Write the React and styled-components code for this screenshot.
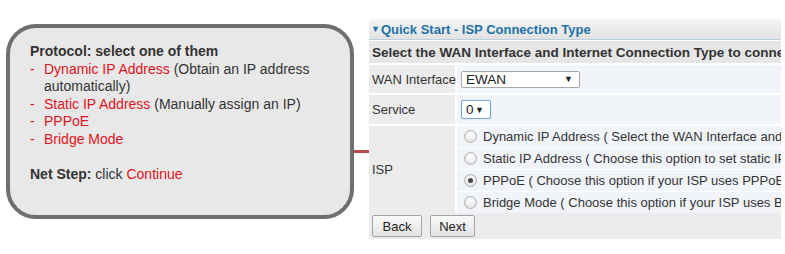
import React from "react";
import styled, { createGlobalStyle } from "styled-components";

const Global = createGlobalStyle`
  html, body { margin: 0; padding: 0; background: #ffffff; }
  body { font-family: "Liberation Sans", Arial, sans-serif; width: 785px; height: 254px; overflow: hidden; }
`;

const Page = styled.div`
  display: flex;
  align-items: flex-start;
  width: 785px;
  height: 254px;
`;

const Bubble = styled.div`
  margin-top: 24px;
  margin-left: 6px;
  box-sizing: border-box;
  width: 348px;
  height: 195px;
  border: 4px solid #6f6f6f;
  border-radius: 30px;
  background: #e8e8e8;
  padding: 15px 0 0 20px;
  font-size: 14px;
  line-height: 17.5px;
  color: #333333;
`;

const Heading = styled.div`
  font-weight: bold;
`;

const Item = styled.div`
  display: flex;
`;

const Dash = styled.span`
  flex: 0 0 14px;
  color: #e0141e;
`;

const Red = styled.span`
  color: #e0141e;
`;

const Spacer = styled.div`
  height: 17.5px;
`;

const Connector = styled.div`
  width: 15px;
  height: 3px;
  margin-top: 150px;
  background: #b94a48;
`;

const Panel = styled.div`
  margin-top: 19px;
  width: 412px;
  overflow: hidden;
  font-size: 13px;
  color: #333333;
  background: #ffffff;
`;

const Header = styled.div`
  height: 20px;
  display: flex;
  align-items: center;
  padding-left: 2px;
  background: linear-gradient(#f5f5f5, #e2e2e2);
  border-bottom: 1px solid #b8cfdd;
  color: #1e72a8;
  font-weight: bold;
  font-size: 13px;
  white-space: nowrap;
`;

const Caret = styled.span`
  font-size: 9px;
  margin-right: 1px;
`;

const TitleRow = styled.div`
  margin-top: 1px;
  height: 22px;
  display: flex;
  align-items: center;
  padding-left: 3px;
  background: #e6e6e6;
  font-weight: bold;
  font-size: 13.5px;
  white-space: nowrap;
  overflow: hidden;
`;

const Grid = styled.div`
  display: grid;
  grid-template-columns: 86px 1fr;
  column-gap: 2px;
  row-gap: 2px;
  margin-top: 2px;
`;

const Label = styled.div`
  background: #ececec;
  display: flex;
  align-items: center;
  padding-left: 3px;
  height: ${(p) => p.$h}px;
  white-space: nowrap;
`;

const Value = styled.div`
  background: #f1f4f9;
  display: flex;
  align-items: center;
  padding-left: 4px;
  height: ${(p) => p.$h}px;
`;

const Options = styled.div`
  display: flex;
  flex-direction: column;
  gap: 1px;
  background: #ffffff;
`;

const OptionRow = styled.div`
  background: #f1f4f9;
  height: 21px;
  display: flex;
  align-items: center;
  padding-left: 7px;
  white-space: nowrap;
`;

const Radio = styled.span`
  box-sizing: border-box;
  flex: 0 0 13px;
  width: 13px;
  height: 13px;
  border-radius: 50%;
  border: 1px solid #b0b0b0;
  background: radial-gradient(circle at 50% 35%, #ffffff, #dcdcdc);
  margin-right: 6px;
  position: relative;
  &::after {
    content: "";
    display: ${(p) => (p.$checked ? "block" : "none")};
    position: absolute;
    left: 3px;
    top: 3px;
    width: 5px;
    height: 5px;
    border-radius: 50%;
    background: #444;
  }
`;

const Select = styled.div`
  box-sizing: border-box;
  width: ${(p) => p.$w}px;
  height: ${(p) => p.$hgt}px;
  border: 1px solid ${(p) => (p.$focus ? "#7aa7d8" : "#a9a9a9")};
  box-shadow: ${(p) => (p.$focus ? "0 0 1px #9cc3ee" : "none")};
  border-radius: 2px;
  background: #ffffff;
  display: flex;
  align-items: center;
  justify-content: space-between;
  padding: 0 6px 0 4px;
  font-size: 13.5px;
  color: #222;
`;

const Arrow = styled.span`
  font-size: 9px;
  color: #222;
`;

const ButtonRow = styled.div`
  height: 26px;
  background: #ececec;
  display: flex;
  align-items: center;
  gap: 8px;
  padding-left: 3px;
`;

const Button = styled.div`
  box-sizing: border-box;
  width: ${(p) => p.$w}px;
  height: 22px;
  border: 1px solid #a3a3a3;
  border-radius: 2px;
  background: linear-gradient(#fafafa, #e3e3e3);
  display: flex;
  align-items: center;
  justify-content: center;
  font-size: 13px;
  color: #222;
`;

const options = [
  { t: "Dynamic IP Address ( Select the WAN Interface and Internet Connection Type )", c: false },
  { t: "Static IP Address ( Choose this option to set static IP information )", c: false },
  { t: "PPPoE ( Choose this option if your ISP uses PPPoE )", c: true },
  { t: "Bridge Mode ( Choose this option if your ISP uses Bridge Mode )", c: false },
];

export default function App() {
  return (
    <>
      <Global />
      <Page>
        <Bubble>
          <Heading>Protocol: select one of them</Heading>
          <Item>
            <Dash>-</Dash>
            <span>
              <Red>Dynamic IP Address</Red> (Obtain an IP address automatically)
            </span>
          </Item>
          <Item>
            <Dash>-</Dash>
            <span>
              <Red>Static IP Address</Red> (Manually assign an IP)
            </span>
          </Item>
          <Item>
            <Dash>-</Dash>
            <Red>PPPoE</Red>
          </Item>
          <Item>
            <Dash>-</Dash>
            <Red>Bridge Mode</Red>
          </Item>
          <Spacer />
          <div>
            <b>Net Step:</b> click <Red>Continue</Red>
          </div>
        </Bubble>
        <Connector />
        <Panel>
          <Header>
            <Caret>▼</Caret>Quick Start - ISP Connection Type
          </Header>
          <TitleRow>Select the WAN Interface and Internet Connection Type to connect to the Internet.</TitleRow>
          <Grid>
            <Label $h={28}>WAN Interface</Label>
            <Value $h={28}>
              <Select $w={119} $hgt={17}>
                EWAN<Arrow>▼</Arrow>
              </Select>
            </Value>
            <Label $h={29}>Service</Label>
            <Value $h={29}>
              <Select $w={30} $hgt={19} $focus>
                0<Arrow>▼</Arrow>
              </Select>
            </Value>
            <Label $h={87}>ISP</Label>
            <Options>
              {options.map((o) => (
                <OptionRow key={o.t}>
                  <Radio $checked={o.c} />
                  {o.t}
                </OptionRow>
              ))}
            </Options>
          </Grid>
          <ButtonRow>
            <Button $w={50}>Back</Button>
            <Button $w={45}>Next</Button>
          </ButtonRow>
        </Panel>
      </Page>
    </>
  );
}
